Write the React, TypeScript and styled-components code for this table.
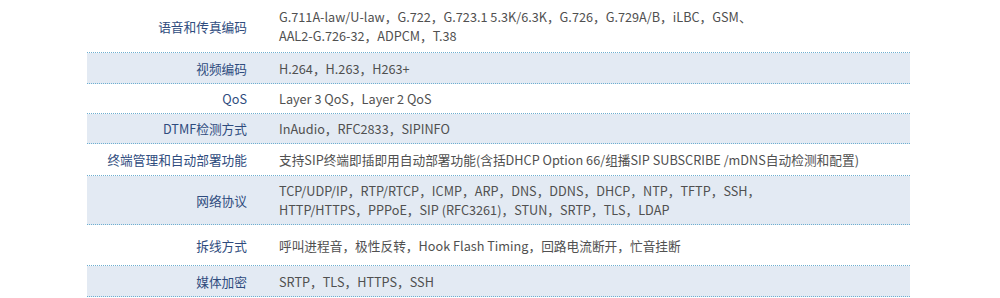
import React, { FC } from 'react'
import styled, { createGlobalStyle } from 'styled-components'

const GlobalStyle = createGlobalStyle`
  html, body {
    margin: 0;
    padding: 0;
    background: #ffffff;
  }
  body {
    font-family: "Noto Sans CJK SC", "Noto Sans", sans-serif;
  }
`

const Page = styled.div`
  width: 1000px;
  height: 298px;
  overflow: hidden;
  padding-left: 87px;
  box-sizing: border-box;
`

const Table = styled.div`
  width: 823px;
  display: flex;
  flex-direction: column;
`

const Row = styled.div<{ $shaded: boolean; $height: number }>`
  display: grid;
  grid-template-columns: 160px 1fr;
  column-gap: 32px;
  align-items: center;
  min-height: ${(p) => p.$height}px;
  box-sizing: border-box;
  background: ${(p) => (p.$shaded ? '#e3eaf3' : '#ffffff')};
  border-bottom: 1px dotted #6eafd0;
`

const Label = styled.div`
  text-align: right;
  font-size: 12.7px;
  line-height: 19px;
  color: #2f4c7e;
  white-space: nowrap;
`

const Value = styled.div`
  font-size: 12.7px;
  line-height: 19px;
  color: #505050;
`

interface Spec {
  label: string
  lines: string[]
  height: number
}

const specs: Spec[] = [
  {
    label: '语音和传真编码',
    lines: [
      'G.711A-law/U-law，G.722，G.723.1 5.3K/6.3K，G.726，G.729A/B，iLBC，GSM、',
      'AAL2-G.726-32，ADPCM，T.38'
    ],
    height: 53
  },
  { label: '视频编码', lines: ['H.264，H.263，H263+'], height: 31 },
  { label: 'QoS', lines: ['Layer 3 QoS，Layer 2 QoS'], height: 30 },
  { label: 'DTMF检测方式', lines: ['InAudio，RFC2833，SIPINFO'], height: 30 },
  {
    label: '终端管理和自动部署功能',
    lines: [
      '支持SIP终端即插即用自动部署功能(含括DHCP Option 66/组播SIP SUBSCRIBE /mDNS自动检测和配置)'
    ],
    height: 32
  },
  {
    label: '网络协议',
    lines: [
      'TCP/UDP/IP，RTP/RTCP，ICMP，ARP，DNS，DDNS，DHCP，NTP，TFTP，SSH，',
      'HTTP/HTTPS，PPPoE，SIP (RFC3261)，STUN，SRTP，TLS，LDAP'
    ],
    height: 49
  },
  {
    label: '拆线方式',
    lines: ['呼叫进程音，极性反转，Hook Flash Timing，回路电流断开，忙音挂断'],
    height: 41
  },
  { label: '媒体加密', lines: ['SRTP，TLS，HTTPS，SSH'], height: 31 }
]

const App: FC = () => {
  return (
    <>
      <GlobalStyle />
      <Page>
        <Table>
          {specs.map((spec, i) => (
            <Row key={spec.label} $shaded={i % 2 === 1} $height={spec.height}>
              <Label>{spec.label}</Label>
              <Value>
                {spec.lines.map((line) => (
                  <div key={line}>{line}</div>
                ))}
              </Value>
            </Row>
          ))}
        </Table>
      </Page>
    </>
  )
}

export default App
